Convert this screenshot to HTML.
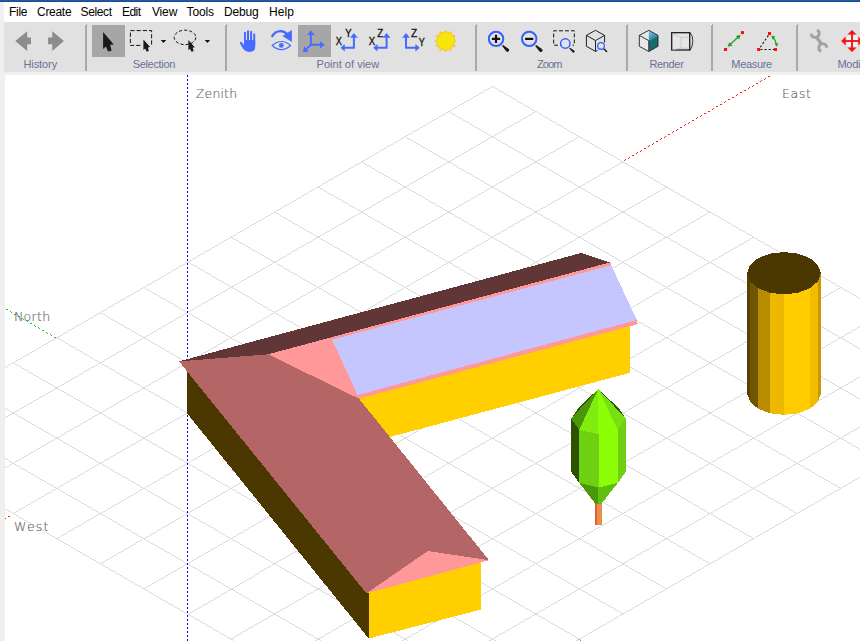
<!DOCTYPE html>
<html><head><meta charset="utf-8"><title>3D view</title>
<style>
html,body{margin:0;padding:0;background:#f0f0f0;overflow:hidden}
body{width:860px;height:641px;position:relative;font-family:"Liberation Sans",sans-serif}
#top{position:absolute;left:0;top:0;width:860px;height:2px;background:linear-gradient(#2558a4 0,#2558a4 50%,#1b4d97 50%,#1b4d97 100%)}
#menu{position:absolute;left:4px;top:2px;width:856px;height:20px;background:#fff}
#tb{position:absolute;left:4px;top:22px;width:856px;height:50px;background:#e1e1e1}
#view{position:absolute;left:5px;top:75px;width:855px;height:566px;background:#fff;overflow:hidden}
svg{position:absolute;left:0;top:0}
svg text{font-family:"Liberation Sans",sans-serif}
svg .ax text{font-family:"DejaVu Sans","Liberation Sans",sans-serif;font-weight:200}
</style></head><body>
<div id="top"></div>
<div id="menu"></div>
<div id="tb"></div>
<div id="view"></div>

<svg width="860" height="641" viewBox="0 0 860 641">
<defs><clipPath id="vp"><rect x="5" y="75" width="855" height="566"/></clipPath></defs>
<g clip-path="url(#vp)">
<g stroke="#d5d5d5" stroke-width="0.866" shape-rendering="crispEdges" fill="none">
<line x1="492.3" y1="86.5" x2="-117.4" y2="438.2"/>
<line x1="535.9" y1="111.6" x2="-73.8" y2="463.3"/>
<line x1="579.4" y1="136.7" x2="-30.3" y2="488.4"/>
<line x1="623.0" y1="161.9" x2="13.3" y2="513.5"/>
<line x1="666.5" y1="187.0" x2="56.8" y2="538.7"/>
<line x1="710.0" y1="212.1" x2="100.4" y2="563.8"/>
<line x1="753.6" y1="237.2" x2="143.9" y2="588.9"/>
<line x1="797.1" y1="262.3" x2="187.5" y2="614.0"/>
<line x1="840.7" y1="287.5" x2="231.0" y2="639.1"/>
<line x1="884.2" y1="312.6" x2="274.6" y2="664.3"/>
<line x1="927.8" y1="337.7" x2="318.1" y2="689.4"/>
<line x1="971.3" y1="362.8" x2="361.7" y2="714.5"/>
<line x1="1014.9" y1="387.9" x2="405.2" y2="739.6"/>
<line x1="492.3" y1="86.5" x2="1014.9" y2="387.9"/>
<line x1="448.8" y1="111.6" x2="971.3" y2="413.1"/>
<line x1="405.2" y1="136.7" x2="927.8" y2="438.2"/>
<line x1="361.7" y1="161.9" x2="884.2" y2="463.3"/>
<line x1="318.1" y1="187.0" x2="840.7" y2="488.4"/>
<line x1="274.6" y1="212.1" x2="797.1" y2="513.5"/>
<line x1="231.0" y1="237.2" x2="753.6" y2="538.7"/>
<line x1="187.5" y1="262.3" x2="710.0" y2="563.8"/>
<line x1="143.9" y1="287.5" x2="666.5" y2="588.9"/>
<line x1="100.4" y1="312.6" x2="623.0" y2="614.0"/>
<line x1="56.8" y1="337.7" x2="579.4" y2="639.1"/>
<line x1="13.3" y1="362.8" x2="535.9" y2="664.3"/>
<line x1="-30.3" y1="387.9" x2="492.3" y2="689.4"/>
<line x1="-73.8" y1="413.1" x2="448.8" y2="714.5"/>
<line x1="-117.4" y1="438.2" x2="405.2" y2="739.6"/>
</g>
<g stroke-width="0.866" fill="none" shape-rendering="crispEdges">
<line x1="187.5" y1="75" x2="187.5" y2="641" stroke="#0000ff" stroke-width="1" stroke-dasharray="2 2"/>
<line x1="624.0" y1="160.7" x2="772.0" y2="74.7" stroke="#ff0000" stroke-dasharray="2.31 2.31"/>
<line x1="55.8" y1="337.9" x2="-3.2" y2="303.8" stroke="#00c000" stroke-dasharray="2.31 2.31"/>
<line x1="10.3" y1="515.6" x2="-6.7" y2="525.4" stroke="#ff0000" stroke-dasharray="2.31 2.31"/>
<line x1="578.9" y1="639.4" x2="599.4" y2="651.3" stroke="#00c000" stroke-dasharray="2.31 2.31"/>
</g>
<g class="ax" fill="#6c6c6c" stroke="#6c6c6c" stroke-width="0.2" font-size="12.5">
<text x="195.8" y="98.0" textLength="41.3" lengthAdjust="spacing">Zenith</text>
<text x="782.0" y="98.1" textLength="29.0" lengthAdjust="spacing">East</text>
<text x="13.9" y="321.0" textLength="36.3" lengthAdjust="spacing">North</text>
<text x="14.1" y="530.7" textLength="34.2" lengthAdjust="spacing">West</text>
</g>
<g shape-rendering="crispEdges" stroke="none">
<polygon points="187.0,367.0 187.0,413.3 368.7,638.5 368.7,588.0" fill="#4a3800"/>
<polygon points="368.7,589.0 480.9,559.5 480.9,609.6 368.7,638.5" fill="#ffcf00"/>
<polygon points="340.0,403.0 630.0,322.0 630.0,372.8 370.0,442.3" fill="#ffcf00"/>
<polygon points="179.0,361.4 581.0,253.0 610.0,262.4 268.1,354.3" fill="#603636"/>
<polygon points="268.1,354.3 610.0,262.4 638.2,324.0 359.0,398.7" fill="#ff9999"/>
<polygon points="332.1,339.7 611.2,265.2 636.8,320.0 357.5,395.0" fill="#c6c6ff"/>
<polygon points="179.0,361.4 268.1,354.3 359.0,398.7 489.0,560.2 427.8,551.0 366.5,593.4" fill="#b46666"/>
<polygon points="366.5,593.4 427.8,551.0 489.0,560.2" fill="#ff9999"/>
<polygon points="820.8,273.2 818.0,281.3 818.0,401.8 820.8,393.7" fill="#c89800"/>
<polygon points="818.0,281.3 810.0,288.2 810.0,408.7 818.0,401.8" fill="#f4bc00"/>
<polygon points="810.0,288.2 798.1,292.8 798.1,413.3 810.0,408.7" fill="#ffcc00"/>
<polygon points="798.1,292.8 784.0,294.4 784.0,414.9 798.1,413.3" fill="#ffcc00"/>
<polygon points="784.0,294.4 769.9,292.8 769.9,413.3 784.0,414.9" fill="#efb800"/>
<polygon points="769.9,292.8 758.0,288.2 758.0,408.7 769.9,413.3" fill="#b88c00"/>
<polygon points="758.0,288.2 750.0,281.3 750.0,401.8 758.0,408.7" fill="#705400"/>
<polygon points="750.0,281.3 747.2,273.2 747.2,393.7 750.0,401.8" fill="#5a4000"/>
<polygon points="820.8,273.2 818.0,281.3 810.0,288.2 798.1,292.8 784.0,294.4 769.9,292.8 758.0,288.2 750.0,281.3 747.2,273.2 750.0,265.1 758.0,258.2 769.9,253.6 784.0,252.0 798.1,253.6 810.0,258.2 818.0,265.1" fill="#4a3800"/>
<polygon points="625.8,471.8 617.8,482.9 598.4,507.7" fill="#6ed010"/>
<polygon points="617.8,482.9 598.5,487.6 598.4,507.7" fill="#60c010"/>
<polygon points="598.5,487.6 579.2,482.9 598.4,507.7" fill="#4a9808"/>
<polygon points="579.2,482.9 571.2,471.8 598.4,507.7" fill="#6ed010"/>
<polygon points="595.3,503.7 601.6,503.7 601.6,524.7 595.3,524.7" fill="#e8904a"/>
<polygon points="595.3,503.7 596.7,503.7 596.7,524.7 595.3,524.7" fill="#e0603c"/>
<polygon points="625.8,418.7 617.8,429.8 617.8,482.9 625.8,471.8" fill="#6ed010"/>
<polygon points="617.8,429.8 598.5,434.4 598.5,487.6 617.8,482.9" fill="#8cff08"/>
<polygon points="598.5,434.4 579.2,429.8 579.2,482.9 598.5,487.6" fill="#6ed010"/>
<polygon points="579.2,429.8 571.2,418.7 571.2,471.8 579.2,482.9" fill="#2c5200"/>
<polygon points="571.2,418.7 578.2,408.3 598.2,389.0" fill="#2c5c00"/>
<polygon points="618.8,408.3 625.8,418.7 598.2,389.0" fill="#2c5c00"/>
<polygon points="625.8,418.7 617.8,429.8 598.2,389.0" fill="#78e010"/>
<polygon points="617.8,429.8 598.5,434.4 598.2,389.0" fill="#8cff08"/>
<polygon points="598.5,434.4 579.2,429.8 598.2,389.0" fill="#80ec10"/>
<polygon points="579.2,429.8 571.2,418.7 598.2,389.0" fill="#4a9808"/>
</g>
</g>
<g font-size="12" fill="#000">
<text x="8.9" y="16" textLength="18.6" lengthAdjust="spacing">File</text>
<text x="37.0" y="16" textLength="34.6" lengthAdjust="spacing">Create</text>
<text x="80.5" y="16" textLength="31.6" lengthAdjust="spacing">Select</text>
<text x="122.0" y="16" textLength="19.0" lengthAdjust="spacing">Edit</text>
<text x="151.9" y="16" textLength="25.4" lengthAdjust="spacing">View</text>
<text x="186.6" y="16" textLength="27.4" lengthAdjust="spacing">Tools</text>
<text x="223.9" y="16" textLength="34.7" lengthAdjust="spacing">Debug</text>
<text x="268.9" y="16" textLength="25.1" lengthAdjust="spacing">Help</text>
</g>
<rect x="85" y="24" width="2" height="47" fill="#a9a9a9"/>
<rect x="85" y="24" width="1" height="1" fill="#fff"/>
<rect x="225" y="24" width="2" height="47" fill="#a9a9a9"/>
<rect x="225" y="24" width="1" height="1" fill="#fff"/>
<rect x="475" y="24" width="2" height="47" fill="#a9a9a9"/>
<rect x="475" y="24" width="1" height="1" fill="#fff"/>
<rect x="626" y="24" width="2" height="47" fill="#a9a9a9"/>
<rect x="626" y="24" width="1" height="1" fill="#fff"/>
<rect x="711" y="24" width="2" height="47" fill="#a9a9a9"/>
<rect x="711" y="24" width="1" height="1" fill="#fff"/>
<rect x="796" y="24" width="2" height="47" fill="#a9a9a9"/>
<rect x="796" y="24" width="1" height="1" fill="#fff"/>
<g font-size="11" fill="#687198">
<text x="23.4" y="67.5" textLength="33.8" lengthAdjust="spacing">History</text>
<text x="132.7" y="67.5" textLength="42.6" lengthAdjust="spacing">Selection</text>
<text x="316.6" y="67.5" textLength="62.6" lengthAdjust="spacing">Point of view</text>
<text x="537.0" y="67.5" textLength="25.5" lengthAdjust="spacing">Zoom</text>
<text x="649.4" y="67.5" textLength="34.4" lengthAdjust="spacing">Render</text>
<text x="731.3" y="67.5" textLength="40.9" lengthAdjust="spacing">Measure</text>
<text x="837.5" y="67.5" letter-spacing="-0.3">Modify</text>
</g>
<g fill="#8c8c8c">
<polygon points="15.3,41 27.2,31.2 27.2,37.6 31,37.6 31,44.2 27.2,44.2 27.2,51"/>
<polygon points="63.9,41 52.3,31.2 52.3,37.6 48.1,37.6 48.1,44.2 52.3,44.2 52.3,51"/>
</g>
<rect x="92" y="25" width="33" height="32" fill="#a6a6a6"/>
<rect x="298" y="25" width="33" height="32" fill="#a6a6a6"/>
<polygon points="103.1,32.1 103.1,49.0 105.8,46.6 108.2,51.4 111.6,50.8 110.2,44.8 113.8,44.4" fill="#1c1a16"/>
<path d="M140.4,45.4 L130.4,45.4 L130.4,30.6 L151.6,30.6 L151.6,44.6" fill="none" stroke="#111" stroke-width="1" stroke-dasharray="4.2 2"/>
<polygon points="143.4,39.4 143.4,50.0 145.1,48.5 146.6,51.6 148.8,51.2 147.9,47.4 150.1,47.1" fill="#1c1a16"/>
<polygon points="160.8,40 166.2,40 163.5,43" fill="#111"/>
<ellipse cx="185" cy="37.4" rx="10.8" ry="7.2" fill="none" stroke="#111" stroke-width="1" stroke-dasharray="3.2 2"/>
<polygon points="188.4,39.9 188.4,50.2 190.0,48.7 191.5,51.7 193.6,51.3 192.7,47.6 194.9,47.4" fill="#1c1a16"/>
<polygon points="204.7,40 210.1,40 207.4,43" fill="#111"/>
<g fill="#466cff" stroke="none">
<rect x="244.0" y="31.8" width="2" height="13" rx="1"/>
<rect x="247.0" y="30.3" width="2" height="13" rx="1"/>
<rect x="250.1" y="30.8" width="2" height="13" rx="1"/>
<rect x="253.2" y="33.5" width="2" height="13" rx="1"/>
<path d="M244,40 L255.2,40 L255.2,47 Q255,50.5 252,51.6 Q249.5,52.3 247,51.6 Q244.5,50.8 243,48.5 L240,43.6 Q239.5,42 240.6,41.7 Q241.6,41.7 242.2,42.7 L244,45 Z"/>
</g>
<g fill="none" stroke="#466cff">
<path d="M272.2,45.5 Q281.4,37.4 290.6,45.5 Q281.4,53.8 272.2,45.5 Z" stroke-width="1.1"/>
<path d="M271.8,36.9 Q275,30.8 281,31.1 Q285,31.4 287.5,34.6" stroke-width="2.3"/>
</g>
<circle cx="281.3" cy="45.4" r="2.4" fill="#466cff"/>
<polygon points="291.9,30 291.9,41.9 282.4,35.9" fill="#466cff"/>
<g stroke="#466cff" stroke-width="1.9" fill="none">
<path d="M310.9,34 L310.9,44.8 L321,44.8 M310.9,44.8 L305.6,49.6"/>
</g>
<polygon points="310.9,30.2 307.2,34.9 314.6,34.9" fill="#466cff"/>
<polygon points="324.7,44.8 320.1,41.1 320.1,48.5" fill="#466cff"/>
<polygon points="303,52 304.2,46.3 308.7,51.7" fill="#466cff"/>
<path d="M353.9,37 L353.9,47.8 L344.0,47.8" stroke="#466cff" stroke-width="2" fill="none"/>
<polygon points="353.9,32.9 350.1,37.8 357.7,37.8" fill="#466cff"/>
<polygon points="340.5,47.8 344.8,44 344.8,51.6" fill="#466cff"/>
<path d="M386.6,37 L386.6,47.8 L376.7,47.8" stroke="#466cff" stroke-width="2" fill="none"/>
<polygon points="386.6,32.9 382.8,37.8 390.4,37.8" fill="#466cff"/>
<polygon points="373.2,47.8 377.5,44 377.5,51.6" fill="#466cff"/>
<path d="M406.0,37 L406.0,47.8 L416.2,47.8" stroke="#466cff" stroke-width="2" fill="none"/>
<polygon points="406.0,32.9 402.2,37.8 409.8,37.8" fill="#466cff"/>
<polygon points="419.7,47.8 415.4,44 415.4,51.6" fill="#466cff"/>
<g font-size="10.3" fill="#161616" stroke="#161616" stroke-width="0.35">
<text x="335.8" y="45.2" textLength="6.1" lengthAdjust="spacingAndGlyphs">X</text>
<text x="345.3" y="36.8" textLength="6.3" lengthAdjust="spacingAndGlyphs">Y</text>
<text x="368.7" y="45.2" textLength="6.4" lengthAdjust="spacingAndGlyphs">X</text>
<text x="377.2" y="36.8" textLength="6.0" lengthAdjust="spacingAndGlyphs">Z</text>
<text x="410.9" y="36.8" textLength="6.2" lengthAdjust="spacingAndGlyphs">Z</text>
<text x="418.7" y="45.8" textLength="6.0" lengthAdjust="spacingAndGlyphs">Y</text>
</g>
<polygon points="445.6,30.3 447.7,33.1 451.0,31.7 451.4,35.2 454.9,35.6 453.5,38.9 456.3,41.0 453.5,43.1 454.9,46.4 451.4,46.8 451.0,50.3 447.7,48.9 445.6,51.7 443.5,48.9 440.2,50.3 439.8,46.8 436.3,46.4 437.7,43.1 434.9,41.0 437.7,38.9 436.3,35.6 439.8,35.2 440.2,31.7 443.5,33.1" fill="#f7e60c" stroke="#ffb61a" stroke-width="0.8"/>
<path d="M503.1,45.1 L508.8,48.9 A1.8,1.8 0 0 1 506.4,51.5 L502.1,46.1 Z" fill="#1a1a1a"/>
<circle cx="496.05" cy="38.9" r="7.2" fill="#e3e3e3" stroke="#3560ff" stroke-width="2"/>
<rect x="491.9" y="37.8" width="8.2" height="2.2" fill="#111"/>
<rect x="494.9" y="34.8" width="2.2" height="8.2" fill="#111"/>
<path d="M536.2,45.1 L542.0,48.9 A1.8,1.8 0 0 1 539.5,51.5 L535.2,46.1 Z" fill="#1a1a1a"/>
<circle cx="529.20" cy="38.9" r="7.2" fill="#e3e3e3" stroke="#3560ff" stroke-width="2"/>
<rect x="525.1" y="37.8" width="8.2" height="2.2" fill="#111"/>
<path d="M564,45.2 L553.7,45.2 L553.7,30.8 L574.3,30.8 L574.3,45.2 L572.6,45.2" fill="none" stroke="#111" stroke-width="1" stroke-dasharray="3.9 2.1"/>
<path d="M570,47.8 L574.5,50.8 A1.3,1.3 0 0 1 572.8,52.6 L569.2,48.6 Z" fill="#1a1a1a"/>
<circle cx="565.3" cy="43.5" r="4.7" fill="#e3e3e3" stroke="#3560ff" stroke-width="1.5"/>
<path d="M595.5,30.3 L604.6,35.4 L604.6,42.5 M597.6,50.3 L595.5,51.4 L586.4,46.3 L586.4,35.4 L595.5,30.3 M586.4,35.4 L595.5,40.5 L604.6,35.4 M595.5,40.5 L595.5,51.4" fill="none" stroke="#222" stroke-width="1"/>
<line x1="604" y1="49" x2="606.6" y2="51.5" stroke="#1a1a1a" stroke-width="1.5" stroke-linecap="round"/>
<circle cx="601" cy="45.95" r="3.3" fill="#e3e3e3" stroke="#3560ff" stroke-width="1.3"/>
<polygon points="648.8,30.3 639.3,35.4 639.3,46.3 648.8,51.5 648.8,40.7" fill="#e8e8e8"/>
<defs><linearGradient id="cg" x1="0" y1="0" x2="0.6" y2="1"><stop offset="0" stop-color="#8cc8ee"/><stop offset="0.55" stop-color="#4a9ec4"/><stop offset="1" stop-color="#1f7378"/></linearGradient></defs>
<polygon points="648.8,30.3 658,35.4 648.8,40.7" fill="url(#cg)"/>
<polygon points="648.8,40.7 658,35.4 658,46.3 648.8,51.5" fill="#1a6b6e"/>
<path d="M648.8,30.3 L639.3,35.4 L639.3,46.3 L648.8,51.5 L648.8,40.7 L639.3,35.4 M648.8,30.3 L658,35.4 L658,46.3 L648.8,51.5" fill="none" stroke="#222" stroke-width="0.9"/>
<path d="M689.8,32.4 Q693.2,36 692.8,41.3 Q692.6,46.5 690.2,50.2" fill="none" stroke="#222" stroke-width="0.9"/>
<rect x="671.7" y="32.7" width="18" height="17.3" fill="#e6e6e6" stroke="#1c1c1c" stroke-width="1.3"/>
<path d="M672.6,33.6 L680.9,37.4 L689.3,37.4 M680.9,37.4 L680.9,48.2 L672.6,49.6 M680.9,48.2 L689.3,48.2" fill="none" stroke="#c4c4c4" stroke-width="0.8"/>
<line x1="729.5" y1="45" x2="738.8" y2="36.5" stroke="#25a022" stroke-width="1.3"/>
<polygon points="727.6,46.8 729.2,42.2 732.6,45.8" fill="#25a022"/>
<polygon points="740.6,34.8 735.8,36 739.2,39.6" fill="#25a022"/>
<rect x="724" y="48" width="3.1" height="3" fill="#ff0c0c"/>
<rect x="740.9" y="31.1" width="3.1" height="3" fill="#ff0c0c"/>
<path d="M768.4,35.4 L759.8,48 M760.4,49.5 L774,49.5" fill="none" stroke="#111" stroke-width="1.1" stroke-dasharray="2.1 2"/>
<path d="M772.8,37.2 Q776.2,40.6 776.4,44.6" fill="none" stroke="#25a022" stroke-width="1.3"/>
<polygon points="771.4,35.6 775.4,36.6 772.4,39.4" fill="#25a022"/>
<polygon points="776.7,46.8 774.5,43.4 778.5,43.6" fill="#25a022"/>
<rect x="768.0" y="32.0" width="3" height="3" fill="#ff0c0c"/>
<rect x="757.1" y="48.0" width="3" height="3" fill="#ff0c0c"/>
<rect x="774.0" y="48.0" width="3" height="3" fill="#ff0c0c"/>
<g fill="none" stroke="#a2a2a2" stroke-linecap="butt">
<line x1="815.8" y1="36" x2="822" y2="45" stroke-width="3.3"/>
<path d="M817,29.9 A4,4 0 1 1 811.2,33.6" stroke-width="2.8"/>
<path d="M821.2,51.4 A4,4 0 1 1 826.8,47.8" stroke-width="2.8"/>
</g>
<rect x="847.0" y="36.0" width="4" height="4" fill="#e8f3f3"/>
<rect x="853.0" y="36.0" width="4" height="4" fill="#e8f3f3"/>
<rect x="847.0" y="42.0" width="4" height="4" fill="#e8f3f3"/>
<rect x="853.0" y="42.0" width="4" height="4" fill="#e8f3f3"/>
<g stroke="#ff0c0c" stroke-width="1.8" fill="none"><line x1="844.0" y1="41.0" x2="860.0" y2="41.0"/><line x1="852.0" y1="33.0" x2="852.0" y2="49.0"/></g>
<g fill="#ff0c0c">
<polygon points="841.2,41.0 845.7,36.5 845.7,45.5"/>
<polygon points="862.8,41.0 858.3,36.5 858.3,45.5"/>
<polygon points="852.0,30.1 847.5,34.6 856.5,34.6"/>
<polygon points="852.0,51.9 847.5,47.4 856.5,47.4"/>
</g>
</svg>
<!--TEXT-->
</body></html>
